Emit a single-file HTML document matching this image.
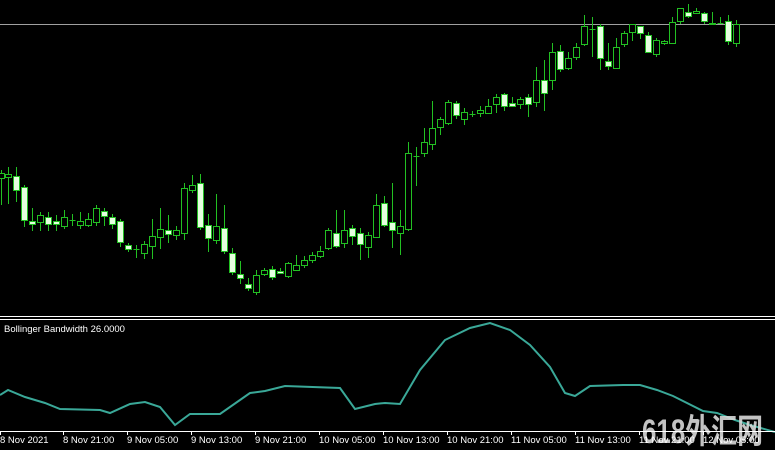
<!DOCTYPE html>
<html><head><meta charset="utf-8"><style>
html,body{margin:0;padding:0;background:#000;width:775px;height:450px;overflow:hidden}
svg{display:block}
text{font-family:"Liberation Sans","Noto Sans CJK SC",sans-serif}
</style></head><body>
<svg id="s" width="775" height="450" xmlns="http://www.w3.org/2000/svg">
<rect width="775" height="450" fill="#000"/>
<line x1="0" y1="24.5" x2="775" y2="24.5" stroke="#a0a0a0" stroke-width="1"/>
<g id="c"></g>
<line x1="0" y1="316.5" x2="775" y2="316.5" stroke="#fff"/>
<line x1="0" y1="319.5" x2="775" y2="319.5" stroke="#fff"/>
<text x="4" y="332" font-size="9.5" fill="#fff">Bollinger Bandwidth 26.0000</text>
<polyline fill="none" stroke="#3aa898" stroke-width="2" points="0,395 8,390 25,397 35,400 45,403 60,409 100,410 110,413 130,404 145,402 160,407 175,425 190,414 220,414 250,393 265,391 285,386 340,388 355,409 375,404 385,403 400,404 420,370 445,340 470,328 490,323 510,330 530,345 550,367 565,393 575,396 590,386 623,385 640,385 657,390 673,396 687,403 703,411 717,413 735,420 750,425 775,432"/>
<text x="642" y="443" font-size="34" font-weight="bold" fill="#d8d8d8" fill-opacity="0.9" textLength="121" lengthAdjust="spacingAndGlyphs">618外汇网</text>
<line x1="0" y1="431.5" x2="775" y2="431.5" stroke="#fff"/>
<g id="ax" fill="#fff" font-size="9.5">
<text x="0" y="443">8 Nov 2021</text>
<text x="63" y="443">8 Nov 21:00</text>
<text x="127" y="443">9 Nov 05:00</text>
<text x="191" y="443">9 Nov 13:00</text>
<text x="255" y="443">9 Nov 21:00</text>
<text x="319" y="443">10 Nov 05:00</text>
<text x="383" y="443">10 Nov 13:00</text>
<text x="447" y="443">10 Nov 21:00</text>
<text x="511" y="443">11 Nov 05:00</text>
<text x="575" y="443">11 Nov 13:00</text>
<text x="639" y="443">11 Nov 21:00</text>
<text x="703" y="443">12 Nov 05:00</text>
</g>
<g id="tk" stroke="#fff"></g>
</svg>
<script>
var C=[
[1,170,173,178,205,0],[8,167,174,177,204,0],[16,167,176,190,202,1],[24,185,187,220,227,1],
[32,208,221,224,231,1],[40,212,215,222,231,0],[48,212,217,224,231,1],[56,215,221,224,231,1],
[64,210,217,226,229,0],[72,214,220,220,226,0],[80,212,221,225,229,0],[88,213,219,225,227,0],
[96,205,208,222,226,0],[104,208,211,216,226,1],[112,214,217,224,229,1],[120,219,221,242,247,1],
[128,243,245,249,252,1],[136,245,249,249,258,0],[144,241,244,253,259,0],[152,219,236,246,259,0],
[160,208,229,237,249,0],[168,215,230,234,243,1],[176,226,230,235,240,0],[184,183,188,233,240,0],
[192,175,185,190,193,0],[200,174,183,227,230,1],[208,214,225,238,252,1],[216,194,226,240,244,0],
[224,205,228,251,254,1],[232,248,253,272,275,1],[240,261,274,278,284,1],[248,278,284,288,291,1],
[256,270,275,292,295,0],[264,268,270,274,276,0],[272,266,269,277,280,1],[280,268,271,273,274,1],
[288,262,263,276,278,0],[296,255,265,270,271,0],[304,256,260,265,268,0],[312,252,255,260,263,0],
[320,246,251,256,258,0],[328,228,230,248,250,0],[336,210,233,246,248,1],[344,210,230,243,248,0],
[352,225,228,236,245,1],[360,228,233,244,260,1],[368,232,235,247,258,0],[376,194,205,237,238,0],
[384,196,203,225,227,1],[392,183,222,230,248,1],[400,210,226,233,255,0],[408,142,153,229,231,0],
[416,147,156,156,186,0],[424,128,142,153,157,0],[432,101,128,144,150,0],[440,117,119,127,135,0],
[448,100,102,123,125,0],[456,101,103,115,119,1],[464,108,112,119,125,0],[472,111,114,114,117,0],
[480,106,110,113,117,0],[488,99,106,113,114,0],[496,94,97,104,113,0],[504,93,94,106,111,1],
[512,97,103,106,107,1],[520,97,99,104,109,0],[528,94,97,104,117,1],[536,67,80,102,107,0],
[544,60,80,93,111,1],[552,43,52,80,90,0],[560,45,51,69,72,1],[568,52,58,68,70,0],
[576,43,47,57,60,0],[584,15,26,44,46,0],[592,17,29,29,57,0],[600,24,26,58,70,1],
[608,43,61,66,70,1],[616,38,47,68,68,0],[624,31,33,44,47,0],[632,24,24,32,41,0],
[640,26,26,33,39,1],[648,32,35,52,52,1],[656,38,40,54,57,0],[664,40,41,43,45,0],
[672,17,22,43,43,0],[680,8,8,21,24,0],[688,4,12,16,18,1],[696,8,11,13,14,0],
[704,12,13,21,24,1],[712,12,23,24,24,1],[720,17,23,23,24,0],[728,15,21,41,45,1],[736,20,24,43,47,0]];
var g=document.getElementById('c'),h='';
C.forEach(function(c){var x=c[0]+0.5;
h+='<line x1="'+x+'" y1="'+c[1]+'" x2="'+x+'" y2="'+c[4]+'" stroke="#22c022"/>';
var bh=Math.max(c[3]-c[2],1);
if(c[3]-c[2]<=0){h+='<line x1="'+(x-3)+'" y1="'+(c[2]+.5)+'" x2="'+(x+3)+'" y2="'+(c[2]+.5)+'" stroke="#22c022"/>';}
else h+='<rect x="'+(x-3)+'" y="'+(c[2]+.5)+'" width="6" height="'+bh+'" fill="'+(c[5]?'#e6ffe0':'#000')+'" stroke="#22c022"/>';});
g.innerHTML=h;
var t=document.getElementById('tk'),s='';
[0,63,127,191,255,319,383,447,511,575,639,703].forEach(function(x){s+='<line x1="'+(x+.5)+'" y1="431" x2="'+(x+.5)+'" y2="435"/>';});
t.innerHTML=s;
</script>
</body></html>
